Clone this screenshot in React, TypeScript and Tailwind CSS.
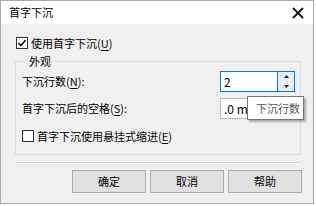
import React from 'react';

const font = { fontFamily: '"Noto Sans CJK SC", "Noto Sans", sans-serif' };

const Check: React.FC<{ checked?: boolean }> = ({ checked }) => (
  <span className="w-[12px] h-[12px] border border-[#333333] bg-white flex items-center justify-center shrink-0">
    {checked && (
      <svg width="10" height="10" viewBox="0 0 10 10">
        <path d="M1.5 5.2 L4 7.6 L8.6 2" fill="none" stroke="#111" strokeWidth="1.6" />
      </svg>
    )}
  </span>
);

const Key: React.FC<{ k: string }> = ({ k }) => (
  <>
    (<span className="underline underline-offset-2">{k}</span>)
  </>
);

const Spin: React.FC<{ value: string; focused?: boolean }> = ({ value, focused }) => (
  <div
    className={`w-[75px] h-[21px] flex bg-white border ${
      focused ? 'border-[#0078d7]' : 'border-[#b9b9b9]'
    }`}
  >
    <div className="flex-1 pl-[3px] text-[12px] leading-[19px] text-black">{value}</div>
    <div className={`w-[17px] flex flex-col border-l ${focused ? 'border-[#0078d7]' : 'border-[#b9b9b9]'} bg-[#e9eef3]`}>
      <div className="flex-1 flex items-center justify-center">
        <svg width="5" height="3" viewBox="0 0 5 3">
          <path d="M0 3 L2.5 0 L5 3 Z" fill="#222" />
        </svg>
      </div>
      <div className="flex-1 flex items-center justify-center">
        <svg width="5" height="3" viewBox="0 0 5 3">
          <path d="M0 0 L2.5 3 L5 0 Z" fill="#222" />
        </svg>
      </div>
    </div>
  </div>
);

const Btn: React.FC<{ label: string }> = ({ label }) => (
  <button className="w-[74px] h-[23px] bg-[#e1e1e1] border border-[#adadad] text-[11px] text-black leading-none">
    {label}
  </button>
);

const App: React.FC = () => {
  return (
    <div className="w-[316px] h-[206px] bg-white" style={font}>
      <div className="w-[314px] h-[204px] border border-[#a9a9a9] flex flex-col">
        <div className="h-[23px] bg-white flex items-center justify-between pl-[8px] pr-[9px]">
          <span className="text-[11px] text-black">首字下沉</span>
          <svg width="12" height="12" viewBox="0 0 12 12">
            <path d="M1 1 L11 11 M11 1 L1 11" stroke="#111" strokeWidth="1.8" />
          </svg>
        </div>
        <div className="flex-1 bg-[#f0f0f0] flex flex-col">
          <div className="mt-[12px] ml-[15px] h-[14px] flex items-center gap-[3px] text-[11px] text-black">
            <Check checked />
            <span>
              使用首字下沉<Key k="U" />
            </span>
          </div>
          <fieldset className="mt-[4px] ml-[14px] w-[286px] border border-[#dcdcdc] pl-[6px] pb-[11px]">
            <legend className="ml-[3px] px-[4px] text-[11px] leading-[14px] text-black">外观</legend>
            <div className="mt-[3px] flex items-center h-[21px]">
              <span className="w-[198px] text-[11px] text-black">
                下沉行数<Key k="N" />:
              </span>
              <Spin value="2" focused />
            </div>
            <div className="mt-[6px] flex items-center h-[21px]">
              <span className="w-[198px] text-[11px] text-black">
                首字下沉后的空格<Key k="S" />:
              </span>
              <div className="relative">
                <Spin value=".0 mm" />
                <div className="absolute left-[27px] top-[-2px] w-[57px] h-[24px] bg-white border border-[#767676] shadow-[2px_2px_2px_rgba(0,0,0,0.3)] pl-[8px] text-[11px] leading-[22px] text-[#575757] whitespace-nowrap">
                  下沉行数
                </div>
              </div>
            </div>
            <div className="mt-[10px] h-[14px] flex items-center gap-[3px] text-[11px] text-black">
              <Check />
              <span>
                首字下沉使用悬挂式缩进<Key k="E" />
              </span>
            </div>
          </fieldset>
          <div className="mt-[7px] ml-[14px] w-[286px] h-[2px] border-t border-[#d5d5d5] border-b border-b-white" />
          <div className="mt-[6px] flex justify-end gap-[4px] pr-[11px]">
            <Btn label="确定" />
            <Btn label="取消" />
            <Btn label="帮助" />
          </div>
        </div>
      </div>
    </div>
  );
};

export default App;
